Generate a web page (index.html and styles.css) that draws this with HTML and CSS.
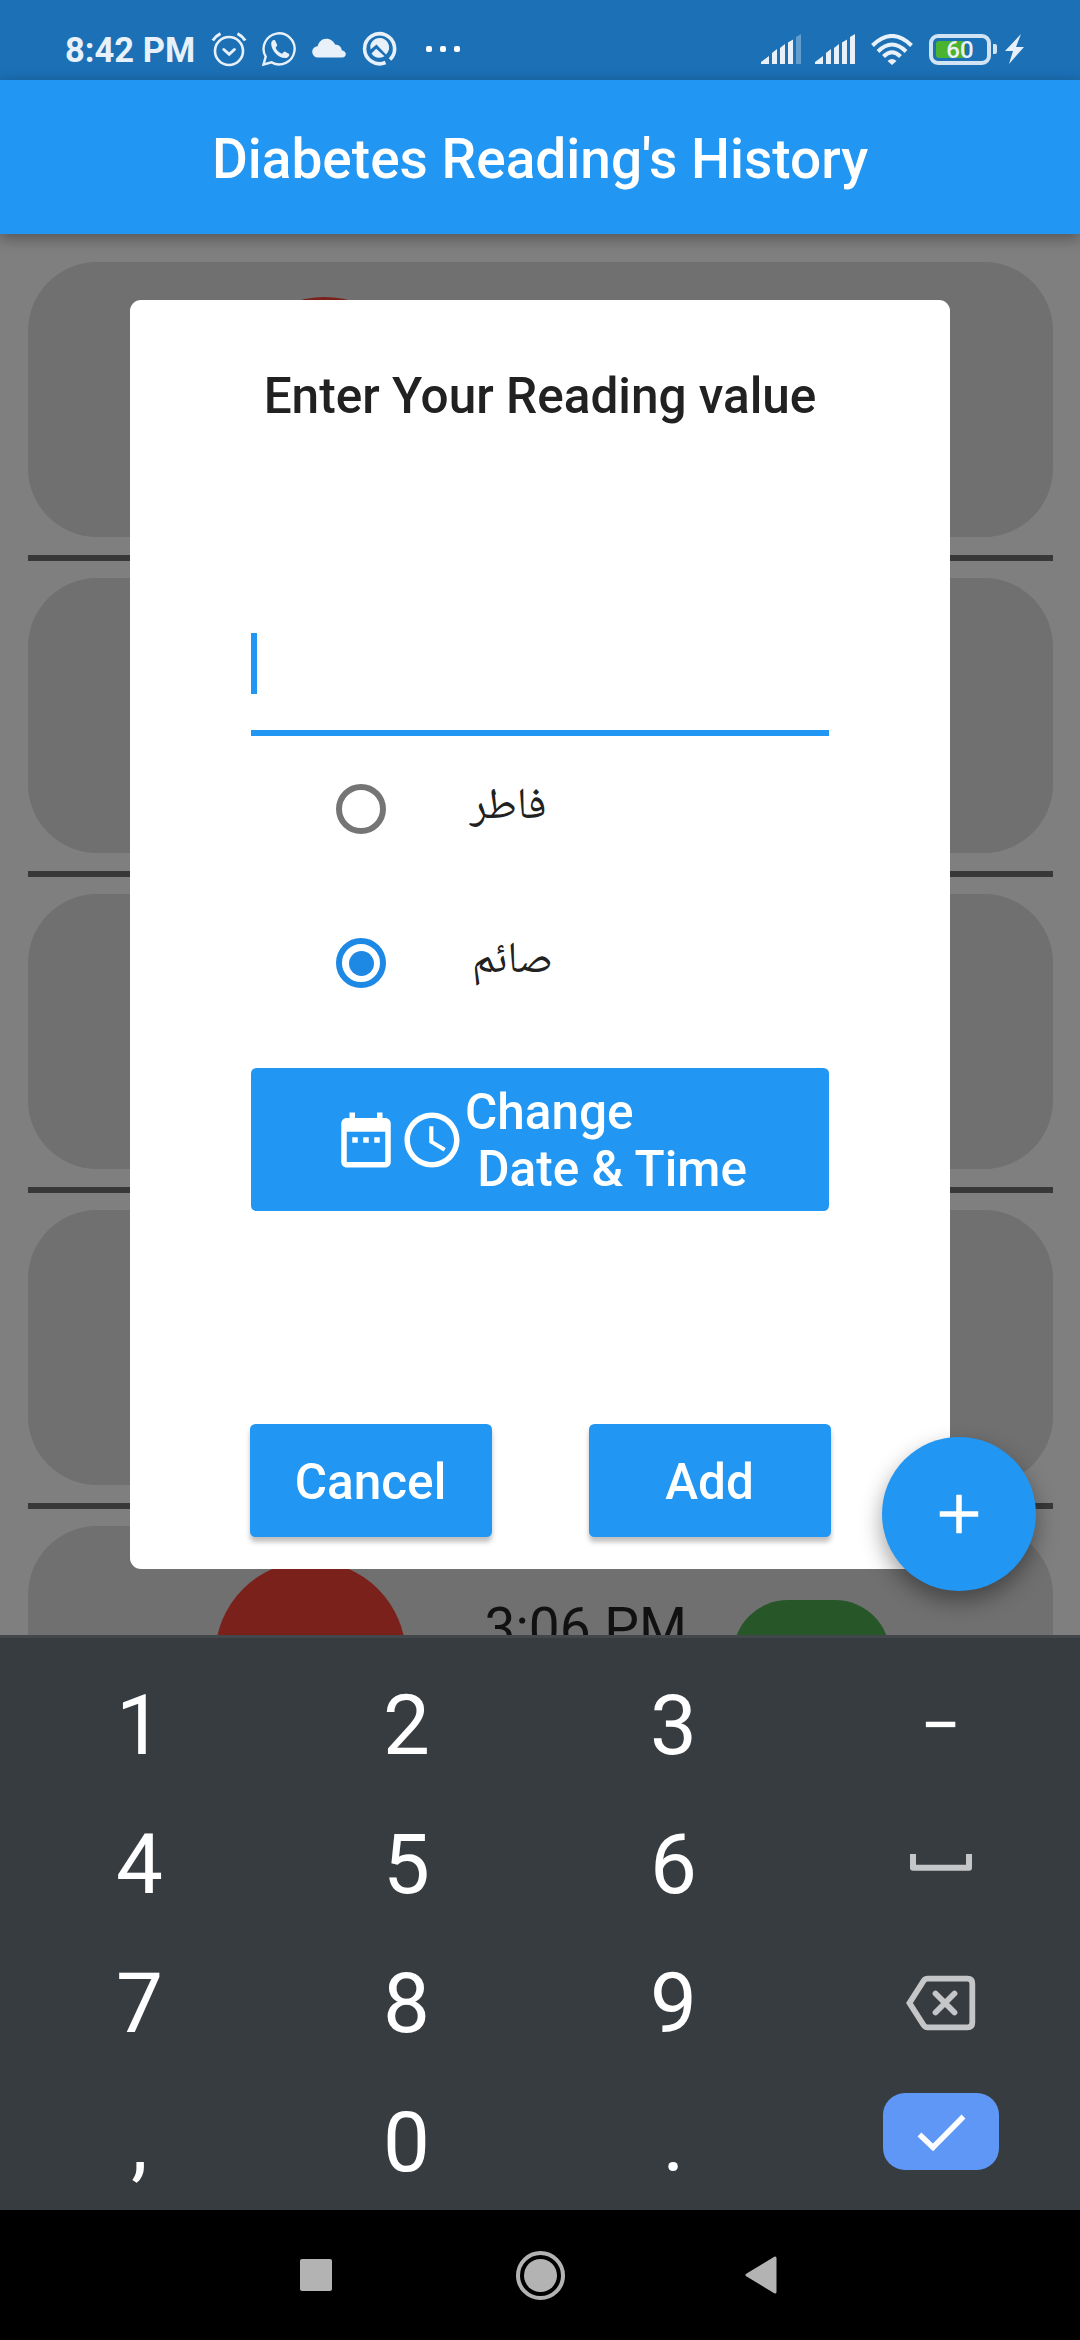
FILE: index.html
```html
<!DOCTYPE html>
<html lang="en">
<head>
<meta charset="utf-8">
<title>Diabetes Reading's History</title>
<link rel="stylesheet" href="styles.css">
</head>
<body>
<div class="screen">
  <div class="status-bar">
    <div class="status-left">
      <span class="clock">8:42 PM</span>
      <svg class="status-icon" viewBox="0 0 36 36" width="36" height="36" fill="none" stroke="#e8f1f9" stroke-linecap="round">
        <circle cx="18" cy="20" r="14" stroke-width="2.600"/>
        <path d="M12.800 18.500l5.400 4.800 5.200-4.800" stroke-width="3"/>
        <path d="M1.800 9.600Q4.500 5 9.500 2.600M34.200 9.600Q31.500 5 26.500 2.600" stroke-width="3" stroke-linecap="butt"/>
      </svg>
      <svg class="status-icon" viewBox="0 0 36 36" width="36" height="36">
        <path d="M2.500 33.500L4.700 25.600A15.500 15.500 0 1 1 10.600 31.400Z" fill="none" stroke="#e8f1f9" stroke-width="2.400"/>
        <path d="M10.200 12.500c0-2.700 2.400-4.200 3.800-3.200l2.200 4.800c.2.800-1.500 2.400-1.500 2.900 1.300 2.800 3.400 4.500 6.300 5.700.7-.1 1.900-2.100 2.700-2.100l4.500 2.300c.6 2.100-1.600 4-3.700 4.100-7.300.3-14.400-7.800-14.300-14.500z" fill="#e8f1f9"/>
      </svg>
      <svg class="status-icon" viewBox="0 0 36 36" width="36" height="36">
        <path d="M7 26.500a5.600 5.600 0 0 1-.4-11.200C7.800 11 10.500 7.800 15.300 7.800c4.300 0 7.400 2.400 8.700 5.800 4.300.1 6.300 2.500 6.800 5.600 3.200.8 4 2.300 4 3.900 0 2-1.500 3.400-3.500 3.400z" fill="#e8f1f9"/>
      </svg>
      <svg class="status-icon" viewBox="0 0 36 36" width="36" height="36">
        <path d="M29 28.500A15 15 0 1 0 24.500 31.500" fill="none" stroke="#e8f1f9" stroke-width="3.600"/>
        <path d="M9.300 14.500A9.500 9.500 0 1 1 25 23.500L15.500 13.500 9.500 18.500z" fill="#e8f1f9"/>
        <path d="M10.500 22.500l4.700-4.800 8.300 7.500q-7.800 4.300-13-2.700z" fill="#e8f1f9"/>
      </svg>
      <div class="more"><i></i><i></i><i></i></div>
    </div>
    <div class="status-right">
      <svg class="signal" viewBox="0 0 40 30" width="40" height="30" fill="#e8f1f9">
        <path d="M0 30v-2l8-6v8zM11 30V19l5-4v15zM19 30V14l5-4v20zM27 30V8.500l5-3V30z"/>
        <path d="M35 30V3l5-3v30z" opacity=".35"/>
      </svg>
      <svg class="signal" viewBox="0 0 40 30" width="40" height="30" fill="#e8f1f9">
        <path d="M0 30v-2l8-6v8zM11 30V19l5-4v15zM19 30V14l5-4v20zM27 30V8.500l5-3V30zM35 30V3l5-3v30z"/>
      </svg>
      <svg class="wifi" viewBox="0 0 42 31" width="42" height="31" fill="none" stroke="#e8f1f9" stroke-width="4">
        <path d="M1.500 11.500Q21-7.500 40.500 11.500M7 17.500Q21 3.500 35 17.500M12.500 22.500Q21 14 29.500 22.500"/>
        <path d="M21 31l-4.500-4q4.500-4 9 0z" fill="#e8f1f9" stroke="none"/>
      </svg>
      <div class="battery"><div class="battery-level"></div><span class="battery-text">60</span></div>
      <div class="battery-tip"></div>
      <svg class="bolt" viewBox="0 0 19 30" width="19" height="30"><path d="M16 0L0 17h8L4 30 19 13h-8z" fill="#e8f1f9"/></svg>
    </div>
  </div>

  <header class="app-bar"><h1 class="app-title">Diabetes Reading's History</h1></header>

  <main class="history">
    <div class="card card-first"><div class="reading"></div></div>
    <div class="divider"></div>
    <div class="card"></div>
    <div class="divider"></div>
    <div class="card"></div>
    <div class="divider"></div>
    <div class="card"></div>
    <div class="divider"></div>
    <div class="card card-last">
      <div class="reading"></div>
      <div class="time">3:06 PM</div>
      <div class="badge"></div>
    </div>
  </main>

  <section class="keyboard">
    <div class="key">1</div><div class="key">2</div><div class="key">3</div><div class="key key-minus">−</div>
    <div class="key">4</div><div class="key">5</div><div class="key">6</div>
    <div class="key key-icon"><svg class="space-icon" viewBox="0 0 62 17" width="62" height="17"><path d="M3 0v13.700h56V0" fill="none" stroke="#c5c6c8" stroke-width="6" stroke-linejoin="round"/></svg></div>
    <div class="key">7</div><div class="key">8</div><div class="key">9</div>
    <div class="key key-icon"><svg class="delete-icon" viewBox="0 0 70 56" width="70" height="56" fill="none" stroke="#c5c6c8" stroke-width="5.800"><path d="M21.500 3.700H61.500Q66.300 3.700 66.300 8.500V47.500Q66.300 52.300 61.500 52.300H21.500Q19 52.300 17.500 50L3.500 28 17.500 6Q19 3.700 21.500 3.700Z"/><path d="M29.500 18.500l19 19M48.500 18.500l-19 19" stroke-linecap="round"/></svg></div>
    <div class="key">,</div><div class="key">0</div><div class="key">.</div>
    <div class="key key-icon"><div class="enter"><svg viewBox="0 0 116 77" width="116" height="77"><path d="M36.500 41.500L50 54.500 80.500 23.500" fill="none" stroke="#fff" stroke-width="5.500"/></svg></div></div>
  </section>

  <nav class="nav-bar">
    <div class="nav-recent"></div>
    <div class="nav-home"><div class="nav-home-dot"></div></div>
    <svg class="nav-back" viewBox="0 0 32 38" width="32" height="38"><path d="M30 2v34L2 19z" fill="#b3b3b3" stroke="#b3b3b3" stroke-width="3" stroke-linejoin="round"/></svg>
  </nav>

  <div class="dialog">
    <h2 class="dialog-title">Enter Your Reading value</h2>
    <div class="field"><div class="caret"></div></div>
    <div class="option"><span class="radio"></span><span class="option-label" lang="ar">فاطر</span></div>
    <div class="option"><span class="radio radio-on"></span><span class="option-label option-label-on" lang="ar">صائم</span></div>
    <div class="date-button">
      <svg viewBox="0 0 24 24" width="66" height="66" fill="#fff"><path d="M9 11H7v2h2v-2zm4 0h-2v2h2v-2zm4 0h-2v2h2v-2zm2-7h-1V2h-2v2H8V2H6v2H5c-1.110 0-1.990.9-1.990 2L3 20c0 1.100.89 2 2 2h14c1.100 0 2-.9 2-2V6c0-1.100-.9-2-2-2zm0 16H5V9h14v11z"/></svg>
      <svg viewBox="0 0 24 24" width="66" height="66" fill="#fff"><path d="M11.990 2C6.470 2 2 6.480 2 12s4.470 10 9.990 10C17.520 22 22 17.520 22 12S17.520 2 11.990 2zM12 20c-4.420 0-8-3.580-8-8s3.580-8 8-8 8 3.580 8 8-3.580 8-8 8zm.5-13H11v6l5.250 3.150.75-1.230-4.500-2.670z"/></svg>
      <span class="date-text">Change
 Date &amp; Time</span>
    </div>
    <div class="actions"><div class="action">Cancel</div><div class="action">Add</div></div>
  </div>

  <div class="fab"><svg viewBox="0 0 24 24" width="66" height="66"><path d="M19 13h-6v6h-2v-6H5v-2h6V5h2v6h6v2z" fill="#fff"/></svg></div>
</div>
</body>
</html>
```
FILE: styles.css
```css
* { box-sizing: border-box; }
body { margin: 0; font-family: Roboto, "Liberation Sans", sans-serif; }
h1, h2 { margin: 0; font-weight: 500; }
svg { display: block; flex: none; }

.screen {
  position: relative;
  display: flex;
  flex-direction: column;
  width: 1080px;
  height: 2340px;
  overflow: hidden;
  background: #7f7f7f;
}

/* status bar */
.status-bar {
  display: flex;
  flex: none;
  justify-content: space-between;
  height: 80px;
  padding: 18px 56px 0 65px;
  background: #1b70b6;
  color: #e8f1f9;
}
.status-left, .status-right { display: flex; align-items: center; height: 62px; }
.clock { width: 146px; padding-top: 2px; font-size: 34.500px; font-weight: 700; line-height: 60px; white-space: nowrap; }
.status-icon { margin-right: 14px; }
.more { display: flex; gap: 8px; margin-left: 15px; }
.more i { width: 6px; height: 6px; border-radius: 2px; background: #fff; }
.signal { margin-right: 14px; }
.wifi { margin: 0 16px 0 2px; }
.battery {
  position: relative;
  width: 62px;
  height: 31px;
  padding: 3px;
  border: 4px solid #d2e3f3;
  border-radius: 9px;
}
.battery-level { width: 29px; height: 17px; border-radius: 3px; background: #4bb32f; }
.battery-text {
  position: absolute;
  inset: -4px 0 -4px 0;
  font-size: 24px;
  font-weight: 500;
  line-height: 32px;
  text-align: center;
}
.battery-tip { width: 4px; height: 10px; margin: 0 8px 0 2px; border-radius: 0 2px 2px 0; background: #d2e3f3; }

/* app bar */
.app-bar {
  z-index: 1;
  display: flex;
  flex: none;
  align-items: center;
  justify-content: center;
  height: 154px;
  background: #2196f3;
  box-shadow: 0 4px 14px rgba(0, 0, 0, .35);
}
.app-title { color: #fff; font-size: 55px; line-height: 66px; white-space: nowrap; padding-top: 3px; }

/* readings list */
.history { flex: none; height: 1401px; padding: 28px 27.500px 0; overflow: hidden; }
.card { display: flex; height: 275px; border-radius: 69px; background: #707070; }
.divider { height: 6px; margin: 18px 0 17px; background: #383838; }
.reading { width: 191px; height: 191px; border-radius: 50%; background: #7b211b; }
.card-first { padding: 35px 0 0 201px; }
.card-last { padding: 35px 0 0 187px; }
.time { width: 203px; margin: 35px 0 0 79px; color: #111; font-size: 55px; line-height: 64px; white-space: nowrap; }
.badge { width: 157px; height: 110px; margin: 39px 0 0 45px; border-radius: 55px; background: #275729; }

/* numeric keyboard */
.keyboard {
  display: grid;
  flex: none;
  grid-template-columns: repeat(4, 267px);
  grid-template-rows: repeat(4, 139px);
  height: 575px;
  padding: 16px 6px 0;
  border-top: 3px solid #42474b;
  background: #373c40;
}
.key { color: #fff; font-size: 83.500px; line-height: 143px; text-align: center; }
.key-minus { font-size: 72px; line-height: 144px; }
.key-icon { display: flex; justify-content: center; }
.space-icon { margin-top: 61px; }
.delete-icon { margin-top: 43px; }
.enter { width: 116px; height: 77px; margin-top: 22px; border-radius: 22px; background: #5e97f6; }

/* navigation bar */
.nav-bar { display: flex; flex: none; align-items: center; height: 130px; padding-left: 300px; background: #000; }
.nav-recent { width: 32px; height: 32px; border-radius: 2px; background: #b3b3b3; }
.nav-home {
  display: flex;
  align-items: center;
  justify-content: center;
  width: 49px;
  height: 49px;
  margin: 1px 180px 0 184px;
  border: 4px solid #b3b3b3;
  border-radius: 50%;
}
.nav-home-dot { width: 33px; height: 33px; flex: none; border-radius: 50%; background: #b3b3b3; }

/* dialog */
.dialog {
  position: absolute;
  z-index: 2;
  top: 300px;
  left: 130px;
  width: 820px;
  height: 1269px;
  padding: 64px 121px 0;
  border-radius: 11px;
  background: #fff;
}
.dialog-title { color: #212121; font-size: 49.500px; line-height: 64px; text-align: center; white-space: nowrap; }
.field { height: 308px; padding-top: 205px; border-bottom: 6px solid #2196f3; }
.caret { width: 6px; height: 61px; background: #2196f3; }
.option { display: flex; align-items: center; height: 154px; padding-left: 85px; }
.field + .option { margin-top: -4px; }
.radio {
  display: flex;
  flex: none;
  align-items: center;
  justify-content: center;
  width: 50px;
  height: 50px;
  border: 6px solid #757575;
  border-radius: 50%;
}
.radio-on { border-color: #1e88e5; }
.radio-on::after { width: 25px; height: 25px; border-radius: 50%; background: #1e88e5; content: ""; }
.option-label { margin-left: 84px; color: #212121; font-family: "Noto Naskh Arabic", "Noto Sans Arabic", "DejaVu Sans", sans-serif; font-size: 44px; line-height: 60px; }
.option-label-on { margin-left: 86px; }
.date-button {
  display: flex;
  align-items: center;
  height: 143px;
  margin-top: 28px;
  padding-left: 82px;
  border-radius: 5.500px;
  background: #2196f3;
  color: #fff;
}
.date-text { padding-top: 3px; font-size: 49.500px; font-weight: 500; line-height: 57.500px; white-space: pre; }
.actions { display: flex; justify-content: space-between; margin: 213px -1.500px 0; }
.action {
  width: 242px;
  height: 113px;
  border-radius: 5.500px;
  background: #2196f3;
  box-shadow: 0 5px 5px rgba(0, 0, 0, .25);
  color: #fff;
  font-size: 49.500px;
  font-weight: 500;
  line-height: 117px;
  text-align: center;
}

/* floating action button */
.fab {
  position: absolute;
  z-index: 3;
  top: 1437px;
  left: 882px;
  display: flex;
  align-items: center;
  justify-content: center;
  width: 154px;
  height: 154px;
  border-radius: 50%;
  background: #2196f3;
  box-shadow: 0 10px 22px rgba(0, 0, 0, .38);
}
```
